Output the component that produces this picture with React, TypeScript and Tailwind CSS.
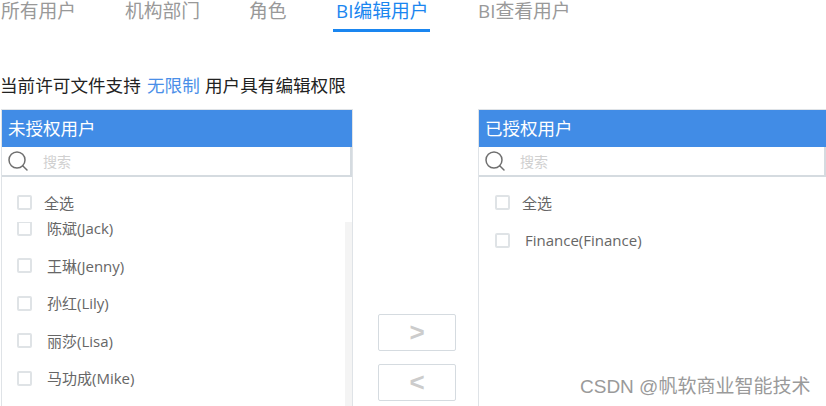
import { Search } from "lucide-react";

const tabs = [
  { label: "所有用户", cls: "ml-[1px] w-[124px]" },
  { label: "机构部门", cls: "w-[124px]" },
  { label: "角色", cls: "w-[84px]" },
  { label: "BI编辑用户", cls: "w-[145px]", active: true },
  { label: "BI查看用户", cls: "w-[120px]" },
];

const pending = ["王琳(Jenny)", "孙红(Lily)", "丽莎(Lisa)", "马功成(Mike)"];

function Check() {
  return <span className="block h-[15px] w-[15px] shrink-0 rounded-[2px] border-2 border-[#dfe3e6] bg-white" />;
}

function Row({ label, gap = 15 }: { label: string; gap?: number }) {
  return (
    <div className="flex h-[37.5px] items-center pl-[15px] text-[15px] text-[#666666]">
      <Check />
      <span style={{ marginLeft: gap }} className="whitespace-nowrap">
        {label}
      </span>
    </div>
  );
}

function PanelHead({ title }: { title: string }) {
  return (
    <>
      <div className="flex h-[37px] items-center bg-[#418ce6] pl-[6px] text-[17.5px] text-white">{title}</div>
      <div className="flex h-[30px] items-center border-b-2 border-r-2 border-[#d5dbe0] pl-[4px] text-[14px] text-[#d0d0d0]">
        <Search className="h-[24px] w-[24px] shrink-0 text-[#6f6f6f]" strokeWidth={1.5} />
        <span className="ml-[13px]">搜索</span>
      </div>
    </>
  );
}

export default function App() {
  return (
    <div className="h-[406px] w-[826px] overflow-hidden bg-white font-['Open_Sans','Noto_Sans_CJK_SC',sans-serif]">
      <div className="flex h-[32px] items-start text-[18.8px] leading-[22px] text-[#999999]">
        {tabs.map((t) => (
          <div
            key={t.label}
            className={t.cls + (t.active ? " relative text-[#1a86f0]" : "")}
          >
            <span className={t.active ? "ml-[3px]" : ""}>{t.label}</span>
            {t.active && <span className="absolute left-0 top-[29px] h-[3px] w-[97px] bg-[#1a86f0]" />}
          </div>
        ))}
      </div>
      <div className="mt-[42px] flex h-[35px] text-[17.6px] leading-[22px] text-[#222222]">
        <span className="w-[147px]">当前许可文件支持</span>
        <span className="w-[58px] text-[#4a8fe8]">无限制</span>
        <span>用户具有编辑权限</span>
      </div>

      <div className="flex items-start pl-[1px]">
        <div className="h-[300px] w-[352px] border-l border-r border-t border-[#dfe3e7]">
          <PanelHead title="未授权用户" />
          <div className="pt-[7px]">
            <Row label="全选" gap={12} />
          </div>
          <div className="relative h-[190px] overflow-hidden">
            <div className="-mt-[12px]">
              <Row label="陈斌(Jack)" />
              {pending.map((p) => (
                <Row key={p} label={p} />
              ))}
            </div>
            <span className="absolute right-0 top-0 h-[190px] w-[7px] bg-[#f4f4f4]" />
          </div>
        </div>

        <div className="flex w-[125px] flex-col items-center pl-[3px] pt-[205px]">
          <button className="flex h-[37px] w-[78px] items-center justify-center rounded-[2px] border border-[#d5dbe0] bg-white font-['Liberation_Sans',sans-serif] text-[26px] font-bold text-[#cccccc]">
            &gt;
          </button>
          <button className="mt-[13px] flex h-[37px] w-[78px] items-center justify-center rounded-[2px] border border-[#d5dbe0] bg-white font-['Liberation_Sans',sans-serif] text-[26px] font-bold text-[#cccccc]">
            &lt;
          </button>
        </div>

        <div className="h-[300px] flex-1 border-l border-t border-[#dfe3e7]">
          <PanelHead title="已授权用户" />
          <div className="pl-[1px] pt-[7px]">
            <Row label="全选" gap={12} />
            <Row label="Finance(Finance)" />
          </div>
        </div>
      </div>

      <div className="absolute left-[580px] top-[376px] font-['Liberation_Sans','Noto_Sans_CJK_SC',sans-serif] text-[19px] leading-[22px] text-[#9a9a9a]">
        CSDN @帆软商业智能技术
      </div>
    </div>
  );
}
